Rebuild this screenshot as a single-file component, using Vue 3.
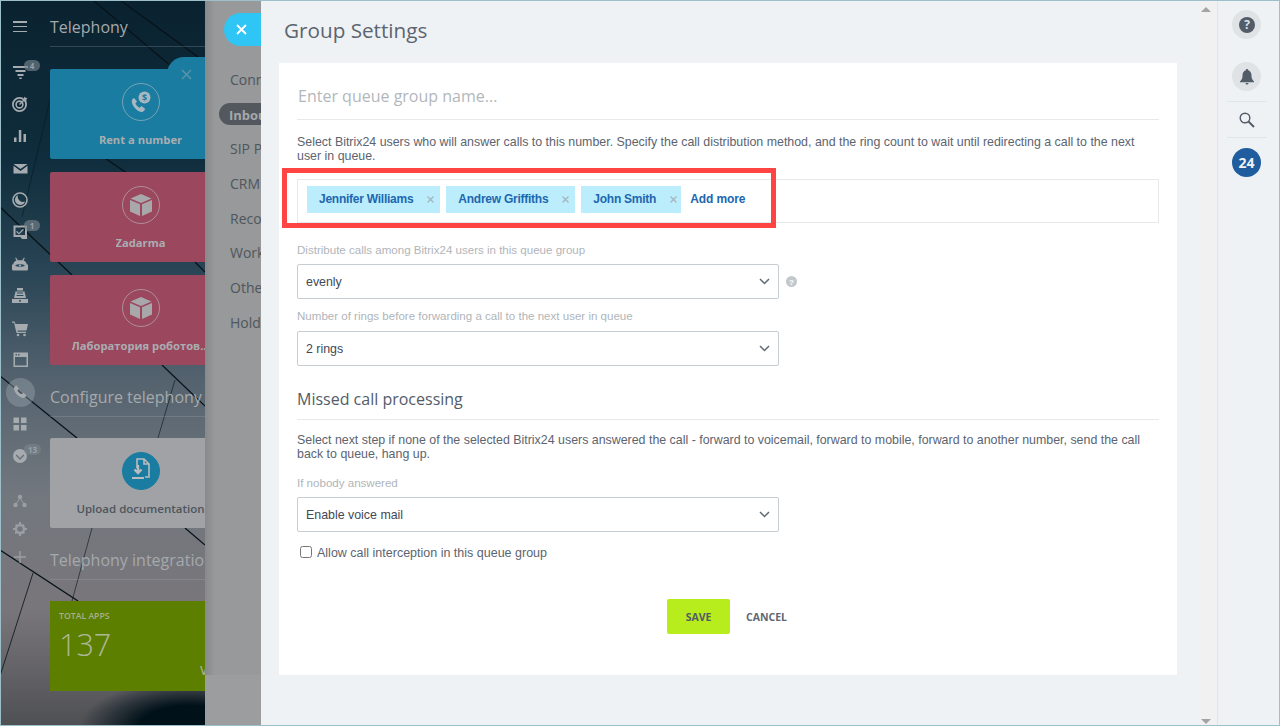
<script setup>
const railTop = ['funnel','target','chart','mail','clock','task','android','register','cart','window','phone','grid','chevron']
const railBottom = ['sitemap','gear','plus']
const badges = { funnel: '4', task: '1', chevron: '13' }
const menu = [
  { label: 'Connected numbers' },
  { label: 'Inbound', active: true },
  { label: 'SIP PBX' },
  { label: 'CRM integration' },
  { label: 'Recording' },
  { label: 'Working hours' },
  { label: 'Other settings' },
  { label: 'Hold music' }
]
const tags = ['Jennifer Williams', 'Andrew Griffiths', 'John Smith']
const lines = [
  { d: 'M93 0L205 95', w: 1.2 },
  { d: 'M120 0L205 62', w: 1.2 },
  { d: 'M0 207L72 275', w: 1.3 },
  { d: 'M105 158L128 174', w: 1.2 },
  { d: 'M195 262L205 272', w: 1.2 },
  { d: 'M0 376L77 438', w: 1.3 },
  { d: 'M162 365L205 406', w: 1.2 },
  { d: 'M185 528L205 545', w: 1.2 },
  { d: 'M0 550L78 601', w: 1.4 },
  { d: 'M50 100L22 217', w: .5 },
  { d: 'M33 573L0 676', w: .8 },
  { d: 'M92 528L72 601', w: .6 },
  { d: 'M175 380L158 438', w: .6 }
]
</script>

<template>
  <div class="screen">
    <aside class="nav">
      <svg class="nav-lines" viewBox="0 0 205 726" width="205" height="726" aria-hidden="true">
        <path v-for="(l, i) in lines" :key="i" :d="l.d" :stroke-width="l.w" stroke="#071219" fill="none" />
      </svg>

      <div class="rail">
        <div class="burger"><i></i><i></i><i></i></div>
        <div v-for="name in railTop" :key="name" class="rail-item" :class="{ current: name === 'phone' }">
          <svg width="18" height="18" viewBox="0 0 18 18" class="rail-icon">
            <template v-if="name === 'funnel'">
              <path d="M2 3h15v2H2zM4.500 7h10v2h-10zM6.500 11h6v2h-6zM8.300 14.500h2.400V16H8.300z" />
            </template>
            <template v-else-if="name === 'target'">
              <circle cx="8.500" cy="9.500" r="6.600" fill="none" stroke="#a5abaf" stroke-width="1.800" />
              <circle cx="8.500" cy="9.500" r="3.400" fill="none" stroke="#a5abaf" stroke-width="1.600" />
              <path d="M8.500 9.500L15 3" stroke="#a5abaf" stroke-width="1.400" />
              <path d="M13 1.500l1.200 1.300 2.300.2-1.300 1.700.5 2-2.500-1.500z" />
            </template>
            <template v-else-if="name === 'chart'">
              <path d="M3 10.500h2.500V15H3zM7.800 3h2.500v12H7.800zM12.500 7H15v8h-2.500z" />
            </template>
            <template v-else-if="name === 'mail'">
              <path d="M2.500 5L9.500 10l7-5zM2.500 6.800V14.500h14V6.800L9.500 12z" />
            </template>
            <template v-else-if="name === 'clock'">
              <circle cx="9" cy="9" r="7" fill="none" stroke="#a5abaf" stroke-width="1.600" />
              <path d="M7 3.900a5.300 5.300 0 1 0 7.200 6.700A5.400 5.400 0 0 1 7 3.900z" />
            </template>
            <template v-else-if="name === 'task'">
              <path fill-rule="evenodd" d="M2.500 2.500h13.500v13.500H11L9.500 14H2.500zM4.500 4.500V12h9.500V4.500z" />
              <path d="M6 8l2 2 4-4.300.9 1L8 11.500 5 8.800z" />
            </template>
            <template v-else-if="name === 'android'">
              <path d="M5 2.500l1.800 2.700h4.400L13 2.500l.8.500L12.600 5.600c2 .9 3 2.300 3.200 3.900H17v4.500c0 1-.8 1.500-1.500 1.500h-13C1.800 15.500 1 15 1 14V9.500h1.200c.2-1.600 1.200-3 3.200-3.900L4.200 3z" />
              <path d="M4 10.500c1.500-1.700 8.500-1.700 10 0-1.500 1.700-8.500 1.700-10 0z" fill="#2b4c5e" />
              <circle cx="9" cy="10.500" r="1.100" />
            </template>
            <template v-else-if="name === 'register'">
              <path d="M6 1h6v2.500H6zM4.500 4.500h9l1.500 6.500H3zM1 12h16v4H1z" />
              <path d="M6 6h6M5.500 8.500h7" stroke="#2b4c5e" stroke-width="1" />
              <rect x="8" y="13.200" width="2" height="1.400" fill="#2b4c5e" />
            </template>
            <template v-else-if="name === 'cart'">
              <path d="M1 2.500h2.500L4.500 5H17l-1.500 6.500H6.500l.3 1.200H15V14H5.500L3 3.800H1z" />
              <circle cx="7" cy="16" r="1.300" /><circle cx="13.500" cy="16" r="1.300" />
            </template>
            <template v-else-if="name === 'window'">
              <path fill-rule="evenodd" d="M2.500 1.500H17v14.500H2.500zM4 6v8.500h11.500V6zM4.500 3v1.500H6V3zM7 3v1.500h1.500V3z" />
            </template>
            <template v-else-if="name === 'phone'">
              <path d="M5.500 2.500l2.500 3-1.500 2c.5 1.500 2.200 3.200 3.800 3.800l2-1.500 3 2.500c-.5 2-2 3.200-3.500 2.700-4-1-8-5-8.800-8.800-.3-1.500.7-3.200 2.500-3.700z" />
            </template>
            <template v-else-if="name === 'grid'">
              <path d="M2.500 2.500h5.500v5.500H2.500zM10 2.500h5.500v5.500H10zM2.500 10h5.500v5.500H2.500zM10 10h5.500v5.500H10z" />
            </template>
            <template v-else-if="name === 'chevron'">
              <path fill-rule="evenodd" d="M9 2a7 7 0 1 1 0 14A7 7 0 0 1 9 2zM5.700 7.500l3.300 3.600 3.300-3.600 1 1-4.300 4.500-4.300-4.500z" />
            </template>
          </svg>
          <span v-if="badges[name]" class="badge">{{ badges[name] }}</span>
        </div>

        <div class="rail-lower">
          <div v-for="name in railBottom" :key="name" class="rail-item low">
            <svg width="16" height="16" viewBox="0 0 16 16" class="rail-icon faint">
              <template v-if="name === 'sitemap'">
                <circle cx="8" cy="4" r="2.200" /><circle cx="3.500" cy="12" r="2.200" /><circle cx="12.500" cy="12" r="2.200" />
                <path d="M8 5L4 11M8 5l4 6" stroke="#9a9fa3" stroke-width="1" />
              </template>
              <template v-else-if="name === 'gear'">
                <circle cx="8" cy="8" r="4" fill="none" stroke="#9a9fa3" stroke-width="2.400" />
                <path d="M7 1h2v2.500H7zM7 12.500h2V15H7zM1 7h2.500v2H1zM12.500 7H15v2h-2.500zM2.900 4.300l1.400-1.400 1.800 1.800-1.400 1.400zM9.900 11.300l1.400-1.400 1.800 1.800-1.400 1.400zM11.300 2.900l1.400 1.400-1.800 1.800-1.400-1.400zM4.300 9.900l1.400 1.400-1.800 1.800-1.400-1.400z" />
              </template>
              <template v-else>
                <path d="M7.300 2h1.400v5.300H14v1.400H8.700V14H7.300V8.700H2V7.300h5.300z" />
              </template>
            </svg>
          </div>
        </div>
      </div>

      <div class="nav-body">
        <h2 class="nav-head first">Telephony</h2>
        <div class="tile blue">
          <span class="tile-circle">
            <svg width="26" height="26" viewBox="0 0 26 26">
              <path d="M6 9l3 3.600-1.600 2c.8 1.800 2.500 3.500 4.200 4.200l2-1.700 3.600 3c-.8 2-2.400 3.200-4 2.800-4.300-1.100-8.200-5-9.300-9.500C3.500 11.600 4.300 9.800 6 9z" fill="#a7b8c0" />
              <circle cx="16.500" cy="8.500" r="6" fill="#a7b8c0" />
              <text x="16.500" y="11.500" class="dollar">$</text>
            </svg>
          </span>
          <span class="tile-text">Rent a number</span>
        </div>
        <div class="tile pink">
          <span class="tile-circle">
            <svg width="24" height="26" viewBox="0 0 24 26"><path d="M12 2l10.500 4.500L12 11 1.500 6.500zM1 8l10 4.300V24L1 19.500zM23 8l-10 4.300V24l10-4.500z" fill="#a8a8aa" /></svg>
          </span>
          <span class="tile-text">Zadarma</span>
        </div>
        <div class="tile pink">
          <span class="tile-circle">
            <svg width="24" height="26" viewBox="0 0 24 26"><path d="M12 2l10.500 4.500L12 11 1.500 6.500zM1 8l10 4.300V24L1 19.500zM23 8l-10 4.300V24l10-4.500z" fill="#a8a8aa" /></svg>
          </span>
          <span class="tile-text">Лаборатория роботов...</span>
        </div>
        <h2 class="nav-head second">Configure telephony</h2>
        <div class="tile grey">
          <span class="tile-circle solid">
            <svg width="26" height="28" viewBox="0 0 26 28" fill="none" stroke="#b9bcbe" stroke-width="1.600">
              <path d="M9 11V2h7l5 5v13h-4M16 2v5h5" />
              <path d="M10 8v7M6.500 12.500L10 16l3.500-3.500" stroke-width="2.400" />
              <path d="M4 21h12" stroke-width="2" />
            </svg>
          </span>
          <span class="tile-text dark">Upload documentation</span>
        </div>
        <h2 class="nav-head third">Telephony integration</h2>
        <div class="apps">
          <span class="apps-label">TOTAL APPS</span>
          <span class="apps-count">137</span>
          <span class="apps-link">View all</span>
        </div>
      </div>

      <div class="tile-close">
        <svg width="11" height="11" viewBox="0 0 11 11"><path d="M1 1l9 9M10 1l-9 9" stroke="#5b93a8" stroke-width="1.500" /></svg>
      </div>
    </aside>

    <section class="mid">
      <div class="close-pill">
        <svg width="11" height="11" viewBox="0 0 11 11"><path d="M1 1l9 9M10 1l-9 9" stroke="#fff" stroke-width="1.800" /></svg>
      </div>
      <nav class="menu">
        <div v-for="m in menu" :key="m.label" class="menu-item" :class="{ active: m.active }">{{ m.label }}</div>
      </nav>
      <div class="mid-foot"></div>
    </section>

    <main class="main">
      <h1 class="title">Group Settings</h1>
      <div class="card">
        <div class="name-field">Enter queue group name...</div>
        <p class="desc first-desc">Select Bitrix24 users who will answer calls to this number. Specify the call distribution method, and the ring count to wait until redirecting a call to the next user in queue.</p>

        <div class="tag-box">
          <span v-for="t in tags" :key="t" class="tag">
            <span class="tag-name">{{ t }}</span>
            <svg class="tag-x" width="7" height="7" viewBox="0 0 7 7"><path d="M.5.5l6 6M6.500.5l-6 6" stroke="#a3b6bf" stroke-width="1.300" /></svg>
          </span>
          <span class="add-more">Add more</span>
        </div>

        <label class="label l1">Distribute calls among Bitrix24 users in this queue group</label>
        <div class="select-row s1">
          <div class="select">
            <span>evenly</span>
            <svg width="11" height="7" viewBox="0 0 11 7"><path d="M1 1l4.500 4.500L10 1" stroke="#5f6a72" stroke-width="1.500" fill="none" /></svg>
          </div>
          <svg class="help" width="11" height="11" viewBox="0 0 11 11"><circle cx="5.500" cy="5.500" r="5.500" fill="#c3c8cb" /><text x="5.500" y="8.500" class="help-q">?</text></svg>
        </div>

        <label class="label l2">Number of rings before forwarding a call to the next user in queue</label>
        <div class="select-row s2">
          <div class="select">
            <span>2 rings</span>
            <svg width="11" height="7" viewBox="0 0 11 7"><path d="M1 1l4.500 4.500L10 1" stroke="#5f6a72" stroke-width="1.500" fill="none" /></svg>
          </div>
        </div>

        <h3 class="section">Missed call processing</h3>
        <p class="desc second-desc">Select next step if none of the selected Bitrix24 users answered the call - forward to voicemail, forward to mobile, forward to another number, send the call back to queue, hang up.</p>

        <label class="label l3">If nobody answered</label>
        <div class="select-row s1">
          <div class="select">
            <span>Enable voice mail</span>
            <svg width="11" height="7" viewBox="0 0 11 7"><path d="M1 1l4.500 4.500L10 1" stroke="#5f6a72" stroke-width="1.500" fill="none" /></svg>
          </div>
        </div>

        <div class="check-row">
          <span class="check"></span>
          <span>Allow call interception in this queue group</span>
        </div>

        <div class="actions">
          <span class="save">SAVE</span>
          <span class="cancel">CANCEL</span>
        </div>

        <div class="highlight"></div>
      </div>
    </main>

    <div class="scroll">
      <i class="arrow up"></i>
      <i class="arrow down"></i>
    </div>

    <aside class="right">
      <div class="round-btn q">
        <svg width="16" height="16" viewBox="0 0 16 16"><circle cx="8" cy="8" r="8" fill="#535c69" /><text x="8" y="12" class="help-big">?</text></svg>
      </div>
      <div class="round-btn bell">
        <svg width="14" height="16" viewBox="0 0 14 16"><path d="M7 0a1.200 1.200 0 0 1 1.200 1.300C10.500 2 11.500 4 11.500 6.500c0 2.500.5 4 2.500 6v.7H0v-.7c2-2 2.500-3.500 2.500-6C2.500 4 3.500 2 5.800 1.300A1.200 1.200 0 0 1 7 0zM5.500 14h3a1.500 1.500 0 0 1-3 0z" fill="#535c69" /></svg>
      </div>
      <div class="search">
        <svg width="16" height="16" viewBox="0 0 16 16" fill="none" stroke="#535c69"><circle cx="6" cy="6" r="4.800" stroke-width="1.400" /><path d="M9.500 9.500L15 15" stroke-width="1.900" /></svg>
      </div>
      <div class="b24">24</div>
    </aside>

    <div class="frame"></div>
  </div>
</template>

<style>
html, body { margin: 0; background: #eef2f4; }
</style>

<style scoped>
.screen {
  position: relative;
  display: flex;
  width: 1280px;
  height: 726px;
  overflow: hidden;
  font-family: "Liberation Sans", Arial, sans-serif;
  color: #535c69;
}
.frame {
  position: absolute;
  inset: 0;
  border: 1px solid #9dbfca;
  pointer-events: none;
}

/* left navigation */
.nav {
  position: relative;
  display: flex;
  flex: 0 0 205px;
  overflow: hidden;
  background:
    radial-gradient(ellipse 110px 46px at 190px 726px, #01111a 45%, rgba(1, 17, 26, 0) 100%),
    linear-gradient(180deg, #0a2230 0%, #0f2d3c 22%, #2b4656 38%, #53626e 52%, #72777e 68%, #79767b 84%, #4f5054 100%);
}
.nav-lines { position: absolute; left: 0; top: 0; }
.rail {
  position: relative;
  flex: 0 0 50px;
  width: 50px;
}
.burger {
  display: flex;
  flex-direction: column;
  justify-content: space-between;
  width: 14px;
  height: 11px;
  padding: 21px 0 24px 13px;
}
.burger i { display: block; height: 1.500px; background: #a5abaf; }
.rail-item {
  position: relative;
  display: flex;
  align-items: center;
  justify-content: center;
  width: 40px;
  height: 32px;
}
.rail-item.low { height: 28px; }
.rail-item.current::before {
  content: "";
  position: absolute;
  left: 6px;
  top: 2px;
  width: 29px;
  height: 29px;
  border-radius: 50%;
  background: rgba(170, 180, 190, .35);
}
.rail-icon { position: relative; fill: #a5abaf; }
.rail-icon.faint { fill: #9a9fa3; }
.rail-lower { margin-top: 15px; }
.badge {
  position: absolute;
  left: 24px;
  top: 4px;
  min-width: 8px;
  height: 11px;
  padding: 0 4px;
  border-radius: 6px;
  background: rgba(120, 130, 138, .65);
  color: #9aa1a6;
  font: 700 8px/11px "Open Sans", sans-serif;
  text-align: center;
}
.nav-body {
  position: relative;
  flex: 0 0 181px;
  width: 181px;
  display: flex;
  flex-direction: column;
}
.nav-head {
  display: flex;
  align-items: center;
  flex: none;
  box-sizing: border-box;
  margin: 0;
  border-bottom: 1px solid rgba(170, 180, 190, .25);
  color: #a5a9ac;
  font: 400 16px "Open Sans", sans-serif;
  white-space: nowrap;
}
.nav-head.first { height: 47px; padding-top: 7px; }
.nav-head.second { height: 39px; margin-top: 13px; }
.nav-head.third { height: 40px; margin-top: 12px; }
.tile {
  display: flex;
  flex-direction: column;
  align-items: center;
  flex: 0 0 90px;
  height: 90px;
  margin-top: 13px;
  padding-top: 14px;
  box-sizing: border-box;
  border-radius: 2px;
}
.nav-head + .tile { margin-top: 21px; }
.nav-head.first + .tile { margin-top: 22px; }
.blue { background: #1a7ca0; }
.pink { background: #9b485f; }
.grey { background: #a0a2a5; }
.tile-circle {
  display: flex;
  align-items: center;
  justify-content: center;
  flex: none;
  width: 36px;
  height: 36px;
  border: 1px solid rgba(190, 195, 200, .55);
  border-radius: 50%;
}
.tile-circle.solid { background: #1a7ca0; border-color: #1a7ca0; }
.tile-text {
  margin-top: 11px;
  color: #a9adb1;
  font: 700 11.200px/16px "Open Sans", sans-serif;
  white-space: nowrap;
  max-width: 138px;
  overflow: hidden;
}
.tile-text.dark { color: #4f555d; font-weight: 600; font-size: 11.500px; max-width: none; }
.dollar { fill: #1a7ca0; font: 700 9px "Open Sans", sans-serif; text-anchor: middle; }
.apps {
  display: flex;
  flex-direction: column;
  flex: 0 0 90px;
  margin-top: 21px;
  padding: 10px 0 0 9px;
  box-sizing: border-box;
  background: #5d7f00;
  color: #a6b08a;
}
.apps-label { font: 600 8.700px/11px "Open Sans", sans-serif; }
.apps-count { font: 300 30.500px/34px "Open Sans", sans-serif; color: #adb79a; margin-top: 5px; }
.apps-link { margin: 2px 0 0 141px; font: 600 12px/16px "Open Sans", sans-serif; white-space: nowrap; }
.tile-close {
  position: absolute;
  left: 167px;
  top: 57px;
  width: 38px;
  height: 34px;
  display: flex;
  align-items: center;
  justify-content: center;
  border-radius: 17px 0 0 0;
  background: #1a7ca0;
}

/* middle panel */
.mid {
  position: relative;
  flex: 0 0 56px;
  width: 56px;
  overflow: hidden;
  display: flex;
  flex-direction: column;
  background: linear-gradient(90deg, #88898b 0, #97999b 10px, #97999b 100%);
}
.close-pill {
  display: flex;
  align-items: center;
  justify-content: flex-start;
  box-sizing: border-box;
  width: 60px;
  height: 33px;
  margin: 13px 0 0 19px;
  padding-left: 12px;
  border-radius: 17px;
  flex: none;
  background: #2fc6f6;
}
.menu { margin-top: 17px; flex: 1; }
.menu-item {
  height: 34.700px;
  padding-left: 25px;
  font: 400 14px/34.700px "Open Sans", sans-serif;
  color: #4f565c;
  white-space: nowrap;
}
.menu-item.active {
  position: relative;
  isolation: isolate;
  padding-left: 24px;
  color: #a5a8ab;
  font-weight: 700;
  font-size: 13px;
}
.menu-item.active::before {
  content: "";
  position: absolute;
  z-index: -1;
  left: 14px;
  top: 5.500px;
  width: 80px;
  height: 22px;
  border-radius: 11px;
  background: #53585e;
}
.mid-foot {
  flex: 0 0 51px;
  background: #9c9d9e;
}

/* main slider */
.main {
  flex: 0 0 939px;
  width: 939px;
  box-sizing: border-box;
  padding: 0 23px 0 18px;
  background: #eef2f4;
}
.title {
  margin: 0;
  height: 63px;
  padding: 16px 0 0 5px;
  box-sizing: border-box;
  color: #5c6470;
  font: 400 20.700px/28px "Open Sans", sans-serif;
}
.card {
  position: relative;
  height: 612px;
  padding: 0 18px;
  box-sizing: border-box;
  background: #fff;
}
.name-field {
  height: 57px;
  box-sizing: border-box;
  padding: 21px 0 0 1px;
  border-bottom: 1px solid #e6e8ea;
  color: #b3b7bb;
  font: 400 16px/24px "Open Sans", sans-serif;
}
.desc {
  margin: 0;
  font-size: 12.400px;
  line-height: 14px;
  color: #5c6470;
}
.first-desc { margin-top: 15px; }
.second-desc { margin-top: 13px; }
.tag-box {
  display: flex;
  align-items: center;
  height: 44px;
  box-sizing: border-box;
  margin-top: 16px;
  padding: 0 0 4px 9px;
  border: 1px solid #e6e9eb;
}
.tag {
  display: flex;
  align-items: center;
  height: 27px;
  margin-right: 6px;
  padding: 0 6px 0 12px;
  background: #bcedfc;
}
.tag:nth-of-type(3) { padding-right: 4px; }
.tag-name {
  color: #2067b0;
  font-size: 12px;
  font-weight: 700;
  letter-spacing: -.25px;
}
.tag-x { margin-left: 14px; }
.add-more {
  margin-left: 3px;
  color: #2067b0;
  font-size: 12px;
  font-weight: 700;
  letter-spacing: -.1px;
}
.label {
  display: block;
  height: 14px;
  color: #b0b5ba;
  font-size: 11.550px;
  line-height: 14px;
}
.l1 { margin-top: 20px; }
.l2 { margin-top: 10px; }
.l3 { margin-top: 15px; }
.select-row {
  display: flex;
  align-items: center;
}
.s1 { margin-top: 7px; }
.s2 { margin-top: 8px; }
.select {
  display: flex;
  align-items: center;
  justify-content: space-between;
  width: 482px;
  height: 35px;
  box-sizing: border-box;
  padding: 0 8px;
  border: 1px solid #c6cdd3;
  border-radius: 2px;
  color: #424956;
  font-size: 12.400px;
}
.help { margin-left: 7px; }
.help-q { fill: #fff; font: 700 8px "Liberation Sans", sans-serif; text-anchor: middle; }
.section {
  height: 34px;
  box-sizing: border-box;
  margin: 20px 0 0;
  border-bottom: 1px solid #e6e8ea;
  color: #535c69;
  font: 400 16px/26px "Open Sans", sans-serif;
}
.check-row {
  display: flex;
  align-items: center;
  height: 14px;
  margin-top: 14px;
  padding-left: 3px;
  font-size: 12.500px;
  line-height: 14px;
  color: #5c6470;
}
.check {
  width: 10px;
  height: 10px;
  margin: -2px 5px 0 0;
  border: 1px solid #767676;
  border-radius: 2.500px;
  background: #fff;
}
.actions {
  display: flex;
  align-items: center;
  justify-content: center;
  margin-top: 39px;
  height: 35px;
  padding-right: 2px;
}
.save {
  display: flex;
  align-items: center;
  justify-content: center;
  width: 63px;
  height: 35px;
  border-radius: 2px;
  background: #b7ed1c;
  color: #535c69;
  font: 700 10.500px "Open Sans", sans-serif;
}
.cancel {
  margin-left: 16px;
  color: #5f6874;
  font: 700 10.500px "Open Sans", sans-serif;
}
.highlight {
  position: absolute;
  left: 3px;
  top: 105px;
  width: 484px;
  height: 50px;
  border: 5px solid #ff4444;
  pointer-events: none;
}

/* scroll strip */
.scroll {
  position: relative;
  flex: 0 0 17px;
  background: #f1f1f1;
}
.arrow {
  position: absolute;
  left: 1px;
  width: 0;
  height: 0;
  border-left: 5px solid transparent;
  border-right: 5px solid transparent;
}
.arrow.up { top: 7px; border-bottom: 5px solid #a3a3a3; }
.arrow.down { bottom: 2px; border-top: 5px solid #a3a3a3; }

/* right panel */
.right {
  flex: 0 0 63px;
  width: 63px;
  box-sizing: border-box;
  display: flex;
  flex-direction: column;
  align-items: center;
  border-left: 1px solid #dfe5e8;
  background: #eef2f4;
  padding: 10px 5px 0 0;
}
.round-btn {
  display: flex;
  align-items: center;
  justify-content: center;
  flex: none;
  width: 29px;
  height: 29px;
  border-radius: 50%;
  background: #dfe3e6;
}
.bell { margin-top: 23px; }
.help-big { fill: #dfe3e6; font: 700 12px "Open Sans", sans-serif; text-anchor: middle; }
.search {
  display: flex;
  align-items: center;
  justify-content: center;
  flex: none;
  box-sizing: border-box;
  width: 40px;
  height: 37px;
  margin-top: 10px;
  border-top: 1px solid #e0e5e8;
  border-bottom: 1px solid #e0e5e8;
}
.b24 {
  display: flex;
  align-items: center;
  justify-content: center;
  flex: none;
  width: 29px;
  height: 29px;
  margin-top: 10px;
  border-radius: 50%;
  background: #1f5d9e;
  color: #eef2f4;
  font: 700 14px "Open Sans", sans-serif;
}
</style>
